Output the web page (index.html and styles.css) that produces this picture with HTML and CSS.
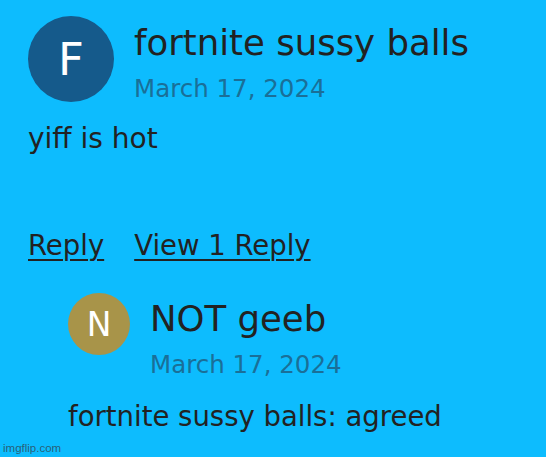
FILE: index.html
```html
<!DOCTYPE html>
<html lang="en">
<head>
    <meta charset="UTF-8">
    <meta name="viewport" content="width=device-width, initial-scale=1.0">
    <title>Comment</title>
    <link rel="stylesheet" href="styles.css">
</head>
<body>
    <div class="comment">
        <div class="comment-head">
            <div class="avatar avatar-big">F</div>
            <div class="meta">
                <div class="name">fortnite sussy balls</div>
                <div class="date">March 17, 2024</div>
            </div>
        </div>
        <p class="text">yiff is hot</p>
        <div class="actions">
            <a href="#" class="link">Reply</a>
            <a href="#" class="link">View 1 Reply</a>
        </div>
        <div class="reply">
            <div class="comment-head">
                <div class="avatar avatar-small">N</div>
                <div class="meta">
                    <div class="name">NOT geeb</div>
                    <div class="date">March 17, 2024</div>
                </div>
            </div>
            <p class="text">fortnite sussy balls: agreed</p>
        </div>
    </div>
    <div class="watermark">imgflip.com</div>
</body>
</html>
```

FILE: styles.css
```css
body {
    margin: 0;
    width: 546px;
    height: 457px;
    background-color: #0dbcfe;
    font-family: "DejaVu Sans", sans-serif;
    color: #222;
    position: relative;
    overflow: hidden;
}
.comment {
    padding: 16px 0 0 28px;
}
.comment-head {
    display: flex;
    align-items: flex-start;
    gap: 20px;
}
.avatar {
    border-radius: 50%;
    color: white;
    line-height: 1;
    display: flex;
    justify-content: center;
    align-items: center;
    flex-shrink: 0;
}
.avatar-big {
    width: 86px;
    height: 86px;
    background-color: #155a8b;
    font-size: 45px;
}
.avatar-small {
    width: 62px;
    height: 62px;
    background-color: #a89449;
    font-size: 33px;
}
.meta {
    margin-top: 7px;
}
.name {
    font-size: 35.5px;
    line-height: 40px;
}
.date {
    font-size: 24.5px;
    line-height: 32px;
    margin-top: 10px;
    color: #1a6f98;
}
.text {
    margin: 16px 0 0;
    font-size: 28px;
    line-height: 36px;
}
.actions {
    display: flex;
    gap: 30px;
    margin-top: 70px;
}
.link {
    color: #222;
    font-size: 27.5px;
    line-height: 36px;
    text-decoration-thickness: 2px;
    text-underline-offset: 4px;
}
.reply {
    padding-left: 40px;
    margin-top: 30px;
}
.reply .meta {
    margin-top: 6px;
}
.reply .text {
    margin-top: 17px;
    font-size: 27.5px;
}
/* imgflip stamp in the corner */
.watermark {
    position: absolute;
    left: 3px;
    bottom: 3px;
    font-family: "Liberation Sans", sans-serif;
    font-size: 11.5px;
    color: rgba(50, 60, 70, 0.75);
}
```
